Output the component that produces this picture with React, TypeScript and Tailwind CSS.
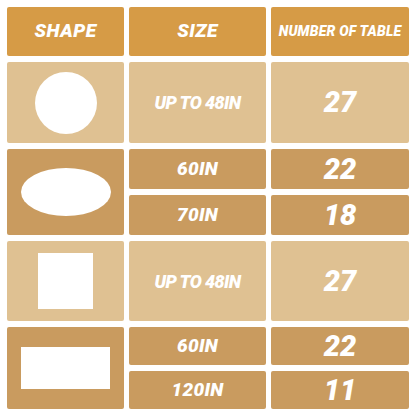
import React from "react";

const font = { fontFamily: "Roboto, 'Liberation Sans', sans-serif" };

function Head({ children, small }: { children: React.ReactNode; small?: boolean }) {
  return (
    <div className="bg-[#d69b46] rounded-[2px] flex items-center justify-center">
      <span className={`text-white font-black italic uppercase ${small ? "text-[14px] tracking-[0.2px]" : "text-[19px] tracking-[0.5px]"}`}>{children}</span>
    </div>
  );
}

function Cell({ tone, children, big, wide }: { tone: "light" | "dark"; children: React.ReactNode; big?: boolean; wide?: boolean }) {
  const size = big ? "text-[29px] leading-none" : wide ? "text-[19px] tracking-[0.3px]" : "text-[18px] tracking-[-0.6px]";
  return (
    <div className={`${tone === "light" ? "bg-[#dfc192]" : "bg-[#c99b5f]"} rounded-[2px] flex items-center justify-center`}>
      <span className={`text-white font-black italic ${size}`}>{children}</span>
    </div>
  );
}

export default function App() {
  return (
    <div className="w-[416px] h-[416px] bg-white pt-[7px] pl-[7px]" style={font}>
      <div className="grid grid-cols-[117px_137px_138px] grid-rows-[49px_81px_40px_40px_80px_38px_38px] gap-x-[5px] gap-y-[6px]">
        <Head>Shape</Head>
        <Head>Size</Head>
        <Head small>Number of table</Head>

        {/* round */}
        <div className="bg-[#dfc192] rounded-[2px] flex items-center justify-center">
          <div className="w-[62px] h-[62px] rounded-full bg-white" />
        </div>
        <Cell tone="light">UP TO 48IN</Cell>
        <Cell tone="light" big>27</Cell>

        {/* oval */}
        <div className="row-span-2 bg-[#c99b5f] rounded-[2px] flex items-center justify-center">
          <div className="w-[90px] h-[48px] rounded-[50%] bg-white" />
        </div>
        <Cell tone="dark" wide>60IN</Cell>
        <Cell tone="dark" big>22</Cell>
        <Cell tone="dark" wide>70IN</Cell>
        <Cell tone="dark" big>18</Cell>

        {/* square */}
        <div className="bg-[#dfc192] rounded-[2px] flex items-center justify-center">
          <div className="w-[55px] h-[56px] bg-white" />
        </div>
        <Cell tone="light">UP TO 48IN</Cell>
        <Cell tone="light" big>27</Cell>

        {/* rectangle */}
        <div className="row-span-2 bg-[#c99b5f] rounded-[2px] flex items-center justify-center">
          <div className="w-[89px] h-[42px] bg-white" />
        </div>
        <Cell tone="dark" wide>60IN</Cell>
        <Cell tone="dark" big>22</Cell>
        <Cell tone="dark" wide>120IN</Cell>
        <Cell tone="dark" big>11</Cell>
      </div>
    </div>
  );
}
